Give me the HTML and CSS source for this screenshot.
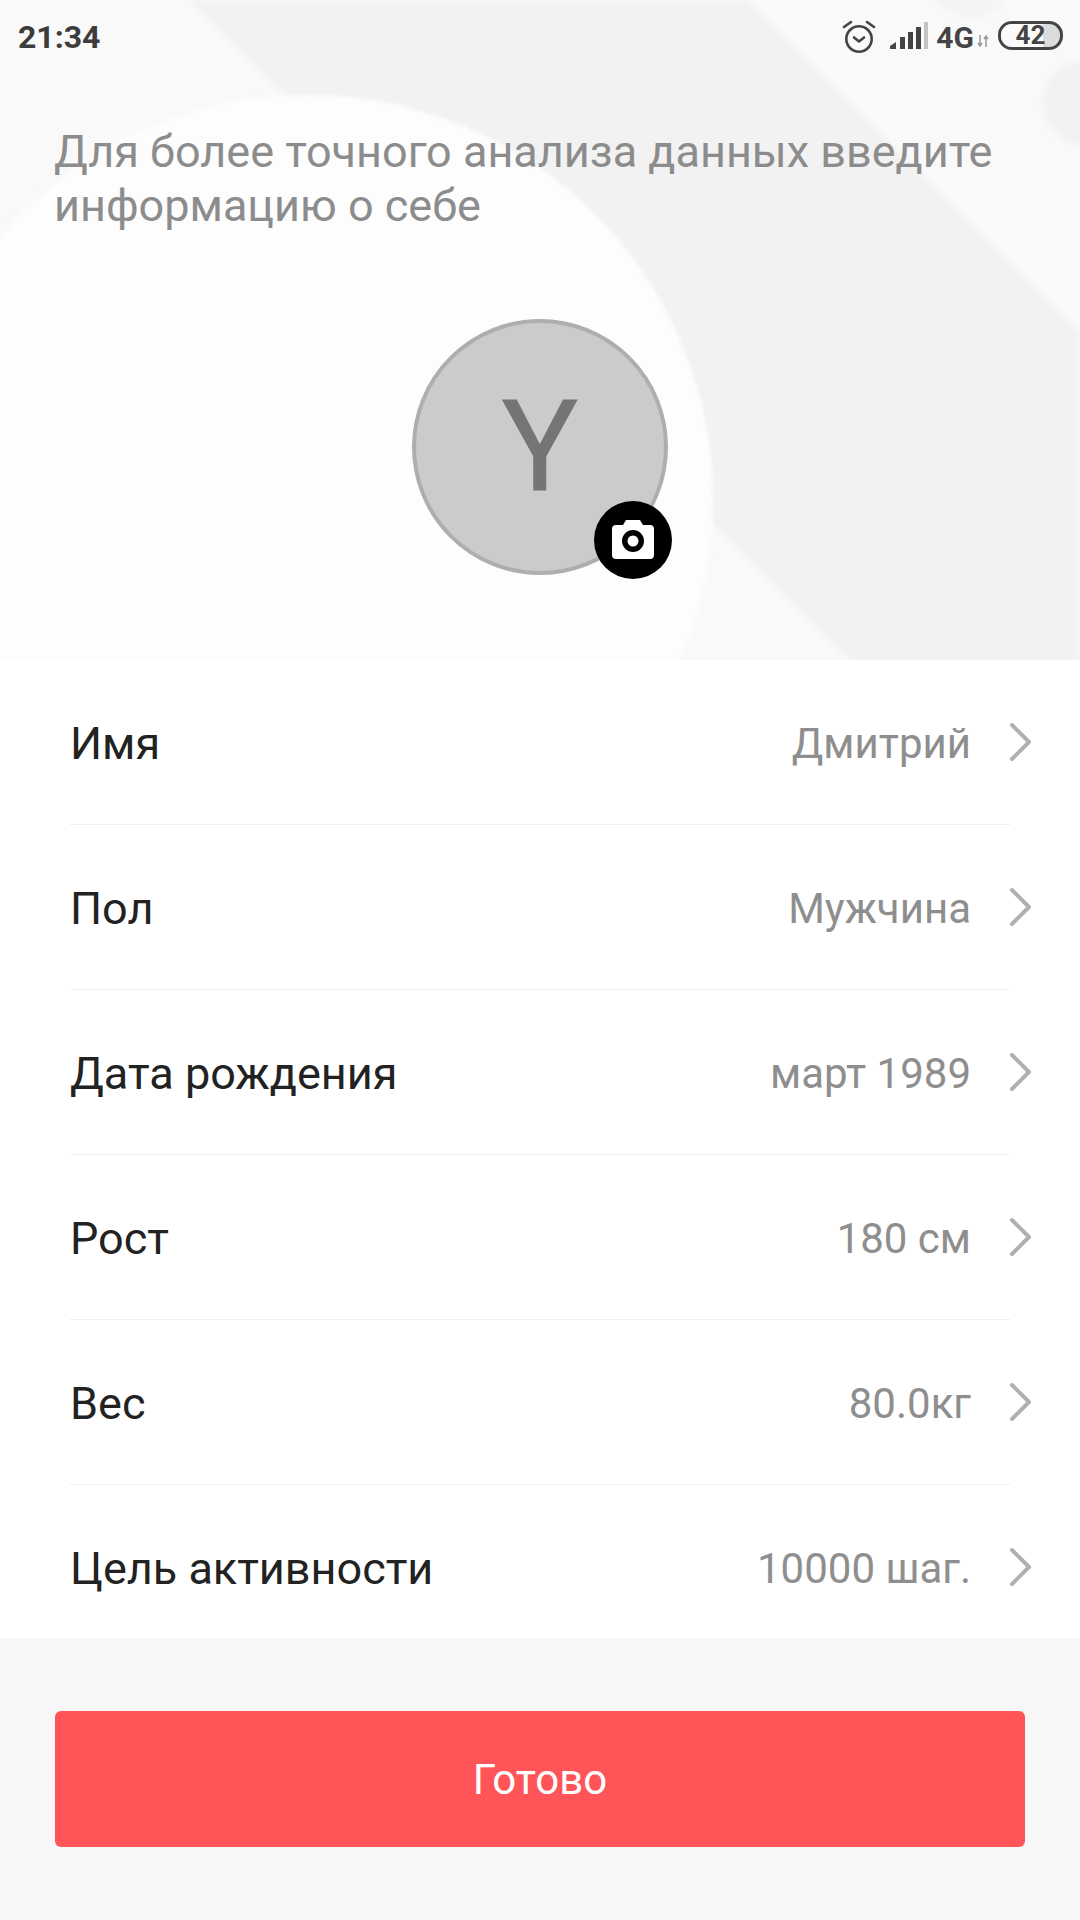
FILE: index.html
```html
<!DOCTYPE html>
<html lang="ru">

<head>
  <meta charset="UTF-8">
  <meta name="viewport" content="width=device-width, initial-scale=1.0">
  <title>Профиль</title>
  <link rel="stylesheet" href="styles.css">
</head>

<body>
  <div class="screen">
    <header class="top">
      <!-- background shapes -->
      <svg class="top-bg" width="1080" height="660" viewBox="0 0 1080 660">
        <polygon class="soft" points="190,0 747,0 1080,333 1080,670 860,670" fill="#f2f2f2" />
        <circle class="soft" cx="1085" cy="103" r="42" fill="#f2f2f2" />
        <circle class="soft" cx="970" cy="-22" r="40" fill="#f4f4f4" />
        <circle class="soft" cx="308" cy="500" r="405" fill="#fdfdfd" />
      </svg>

      <div class="status">
        <span class="time">21:34</span>
        <div class="status-icons">
          <svg width="36" height="36" viewBox="0 0 36 36" fill="none" stroke="#444" stroke-width="2.6">
            <circle cx="18" cy="20" r="12.7" />
            <path d="M13 18.5l5 4 5-4" stroke-linecap="round" stroke-linejoin="round" />
            <path d="M3 8l7-5M33 8l-7-5" stroke-linecap="round" />
          </svg>
          <svg class="signal" width="38" height="28" viewBox="0 0 38 28">
            <path d="M0 24l6-4v7H0z" fill="#444" />
            <rect x="10" y="15" width="5" height="12" fill="#444" />
            <rect x="18" y="10" width="5" height="17" fill="#444" />
            <rect x="26" y="5" width="5" height="22" fill="#444" />
            <rect x="34" y="0" width="4" height="27" fill="#c4c4c4" />
          </svg>
          <span class="net">4G</span>
          <svg class="arrows" width="12" height="14" viewBox="0 0 12 14" fill="none" stroke="#999" stroke-width="1.5">
            <path d="M3 1v11M1 9l2 3 2-3M9 13V2M7 5l2-3 2 3" />
          </svg>
          <div class="battery"><span class="battery-level"></span><span class="battery-num">42</span></div>
        </div>
      </div>

      <p class="intro">Для более точного анализа данных введите информацию о себе</p>

      <div class="avatar">
        Y
        <span class="camera">
          <svg width="44" height="40" viewBox="0 0 44 40">
            <path fill-rule="evenodd" fill="#fff" d="M5 5h7l3-5h14l3 5h7a4 4 0 0 1 4 4v26a4 4 0 0 1-4 4H5a4 4 0 0 1-4-4V9a4 4 0 0 1 4-4zM22 10a11 11 0 1 0 0 22 11 11 0 0 0 0-22zM22 15.500a5.500 5.500 0 1 1 0 11 5.500 5.500 0 0 1 0-11z" />
          </svg>
        </span>
      </div>
    </header>

    <main class="list">
      <div class="row">
        <span class="row-label">Имя</span>
        <span class="row-value">Дмитрий</span>
        <svg class="chevron" width="24" height="40" viewBox="0 0 24 40"><path d="M4 3l17 17L4 37" /></svg>
      </div>
      <div class="row">
        <span class="row-label">Пол</span>
        <span class="row-value">Мужчина</span>
        <svg class="chevron" width="24" height="40" viewBox="0 0 24 40"><path d="M4 3l17 17L4 37" /></svg>
      </div>
      <div class="row">
        <span class="row-label">Дата рождения</span>
        <span class="row-value">март 1989</span>
        <svg class="chevron" width="24" height="40" viewBox="0 0 24 40"><path d="M4 3l17 17L4 37" /></svg>
      </div>
      <div class="row">
        <span class="row-label">Рост</span>
        <span class="row-value">180 см</span>
        <svg class="chevron" width="24" height="40" viewBox="0 0 24 40"><path d="M4 3l17 17L4 37" /></svg>
      </div>
      <div class="row">
        <span class="row-label">Вес</span>
        <span class="row-value">80.0кг</span>
        <svg class="chevron" width="24" height="40" viewBox="0 0 24 40"><path d="M4 3l17 17L4 37" /></svg>
      </div>
      <div class="row">
        <span class="row-label">Цель активности</span>
        <span class="row-value">10000 шаг.</span>
        <svg class="chevron" width="24" height="40" viewBox="0 0 24 40"><path d="M4 3l17 17L4 37" /></svg>
      </div>
    </main>

    <footer class="bottom">
      <button class="done" type="button">Готово</button>
    </footer>
  </div>
</body>

</html>
```
FILE: styles.css
```css
body {
  margin: 0;
  font-family: Roboto, "Noto Sans", sans-serif;
  background-color: #f8f8f8;
}

.screen {
  width: 1080px;
  height: 1920px;
  display: flex;
  flex-direction: column;
  overflow: hidden;
}

.top {
  position: relative;
  height: 660px;
  overflow: hidden;
  background-color: #f9f9f9;
}

.top-bg {
  position: absolute;
  top: 0;
  left: 0;
}

.soft {
  filter: blur(2px);
}

.status {
  position: relative;
  height: 74px;
  padding: 0 17px 0 18px;
  display: flex;
  justify-content: space-between;
  align-items: center;
}

.time {
  font-size: 32px;
  font-weight: 700;
  color: #3c3c3c;
}

.status-icons {
  display: flex;
  align-items: center;
}

.signal {
  margin: 0 0 3px 13px;
}

.net {
  margin-left: 8px;
  font-size: 30px;
  font-weight: 700;
  color: #444;
}

.arrows {
  margin: 8px 0 0 3px;
}

.battery {
  position: relative;
  width: 59px;
  height: 23px;
  margin: 0 0 4px 9px;
  border: 3px solid #444;
  border-radius: 14px;
  overflow: hidden;
  text-align: center;
  background-color: #dcdcdc;
}

.battery-level {
  position: absolute;
  top: 0;
  left: 0;
  bottom: 0;
  width: 72%;
  background-color: #fbfbfb;
}

.battery-num {
  position: relative;
  font-size: 26px;
  line-height: 23px;
  font-weight: 700;
  color: #444;
  display: block;
}

.intro {
  position: relative;
  margin: 51px 40px 0 54px;
  font-size: 45px;
  line-height: 54px;
  color: #8c8c8c;
}

.avatar {
  position: relative;
  box-sizing: border-box;
  width: 256px;
  height: 256px;
  margin: 86px auto 0;
  border: 4px solid #aeaeae;
  border-radius: 50%;
  background-color: #cbcbcb;
  color: #757575;
  font-size: 127px;
  line-height: 248px;
  text-align: center;
  -webkit-text-stroke: 1px #757575;
}

.camera {
  position: absolute;
  right: -8px;
  bottom: -8px;
  width: 78px;
  height: 78px;
  border-radius: 50%;
  background-color: #000;
  display: flex;
  align-items: center;
  justify-content: center;
}

.list {
  height: 978px;
  overflow: hidden;
  background-color: #fff;
}

.row {
  position: relative;
  box-sizing: border-box;
  height: 165px;
  margin: 0 70px;
  padding-top: 2px;
  display: flex;
  align-items: center;
  border-bottom: 1px solid #efefef;
}

.row:last-child {
  border-bottom: none;
}

.row-label {
  flex: 1;
  font-size: 45px;
  color: #222;
}

.row-value {
  margin-right: 39px;
  font-size: 42px;
  color: #8e8e8e;
}

.chevron {
  position: absolute;
  right: -22px;
  top: 62px;
  fill: none;
  stroke: #b0b0b0;
  stroke-width: 4;
  stroke-linecap: round;
  stroke-linejoin: round;
}

.bottom {
  flex: 1;
  padding: 73px 55px 0;
  background-color: #f7f7f7;
}

.done {
  display: block;
  width: 100%;
  height: 136px;
  border: none;
  border-radius: 6px;
  background-color: #ff5558;
  color: #fff;
  font-family: Roboto, "Noto Sans", sans-serif;
  font-size: 42px;
}
```
